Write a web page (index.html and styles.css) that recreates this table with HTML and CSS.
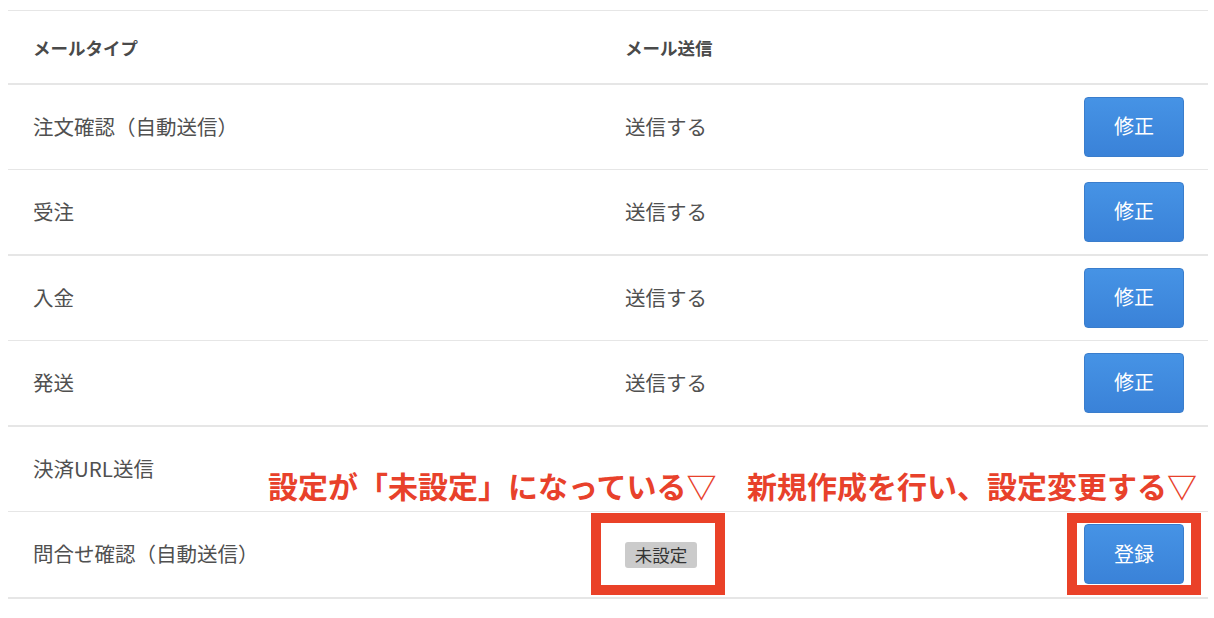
FILE: index.html
```html
<!DOCTYPE html>
<html lang="ja">
<head>
<meta charset="utf-8">
<link rel="stylesheet" href="styles.css">
</head>
<body>
<div class="table">
  <div class="head">
    <div class="c1">メールタイプ</div>
    <div class="c2">メール送信</div>
  </div>
  <div class="row">
    <div class="c1">注文確認（自動送信）</div>
    <div class="c2">送信する</div>
    <div class="c3"><button class="btn">修正</button></div>
  </div>
  <div class="row thick">
    <div class="c1">受注</div>
    <div class="c2">送信する</div>
    <div class="c3"><button class="btn">修正</button></div>
  </div>
  <div class="row">
    <div class="c1">入金</div>
    <div class="c2">送信する</div>
    <div class="c3"><button class="btn">修正</button></div>
  </div>
  <div class="row thick">
    <div class="c1">発送</div>
    <div class="c2">送信する</div>
    <div class="c3"><button class="btn">修正</button></div>
  </div>
  <div class="row">
    <div class="c1">決済URL送信</div>
    <div class="c2"></div>
  </div>
  <div class="row thick last">
    <div class="c1">問合せ確認（自動送信）</div>
    <div class="c2"><span class="badge">未設定</span></div>
    <div class="c3"><button class="btn">登録</button></div>
  </div>

  <div class="note note-left">設定が「未設定」になっている▽</div>
  <div class="note note-right">新規作成を行い、設定変更する▽</div>
  <div class="mark mark-left"></div>
  <div class="mark mark-right"></div>
</div>
</body>
</html>
```

FILE: styles.css
```css
html, body {
  margin: 0;
  padding: 0;
  background: #fff;
}
body {
  font-family: "Noto Sans CJK JP", "Noto Sans", sans-serif;
  color: #505050;
}
.table {
  position: relative;
  margin: 10px 0 0 8px;
  width: 1200px;
  border-top: 1px solid #e6e6e6;
}
.head {
  display: flex;
  align-items: center;
  height: 72px;
  border-bottom: 2px solid #e6e6e6;
  font-weight: bold;
  font-size: 17.5px;
  color: #4a4a4a;
}
.row {
  display: flex;
  align-items: center;
  height: 84px;
  border-bottom: 1px solid #e6e6e6;
  font-size: 20.5px;
}
.row.thick {
  border-bottom-width: 2px;
}
.row.last {
  height: 85px;
}
.c1 {
  width: 592px;
  padding-left: 25px;
  box-sizing: border-box;
  flex: none;
}
.row .c1,
.row .c2 {
  padding-bottom: 3px;
}
.c2 {
  flex: 1;
  padding-left: 25px;
}
.c3 {
  padding-right: 24px;
  display: flex;
  align-items: center;
}
.btn {
  width: 100px;
  height: 60px;
  box-sizing: border-box;
  border: 1px solid #3a7dcc;
  border-radius: 4px;
  background: linear-gradient(#4693e5, #3a82d8);
  color: #fff;
  font-family: "Noto Sans CJK JP", sans-serif;
  font-size: 20px;
  padding: 0 0 2px;
  margin-bottom: 1px;
}
.badge {
  display: inline-flex;
  align-items: center;
  justify-content: center;
  width: 72px;
  height: 26px;
  background: #cbcbcb;
  border-radius: 3px;
  font-size: 17.5px;
  color: #333;
  margin-top: 4px;
}
.note {
  position: absolute;
  top: 459px;
  font-size: 30px;
  line-height: 30px;
  font-weight: bold;
  color: #e8412b;
  white-space: nowrap;
}
.note-left { left: 260px; }
.note-right { left: 739px; }
.mark {
  position: absolute;
  top: 502px;
  width: 134px;
  height: 82px;
  box-sizing: border-box;
  border: 10px solid #ea4128;
}
.mark-left { left: 583px; }
.mark-right { left: 1059px; }
```
